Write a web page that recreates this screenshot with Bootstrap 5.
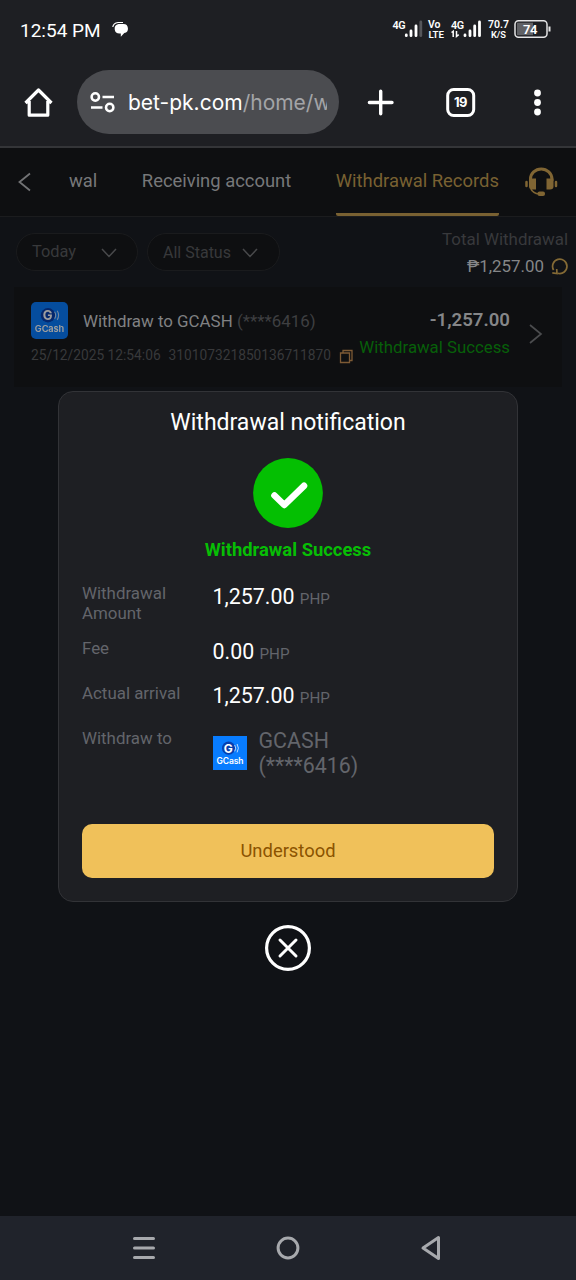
<!DOCTYPE html>
<html lang="en">
<head>
<meta charset="utf-8">
<meta name="viewport" content="width=device-width, initial-scale=1">
<title>Withdrawal Records</title>
<link href="https://cdn.jsdelivr.net/npm/bootstrap@5.3.0/dist/css/bootstrap.min.css" rel="stylesheet">
<script src="https://cdn.jsdelivr.net/npm/bootstrap@5.3.0/dist/js/bootstrap.bundle.min.js" defer></script>
<style>
  body { font-family: Roboto, "Liberation Sans", sans-serif; background: #101216; color: #fff; height: 1280px; line-height: 1; overflow: hidden; }
  svg { display: block; flex: none; }
  span, h1 { white-space: nowrap; }
  .chrome { background: #1e1f23; }
  .status { height: 58px; padding: 0 24px 0 20px; }
  .clock { font-size: 19px; padding-top: 2px; }
  .toolbar { height: 90px; padding: 0 30px 0 22px; border-bottom: 2px solid #343538; }
  .url { width: 262px; height: 64px; margin-left: 22px; padding-left: 13px; background: #4b4c50; }
  .address { font-family: Inter, sans-serif; font-size: 21px; width: 199px; overflow: hidden; line-height: 32px; margin: 2px 0 0 12px; }
  .address i { font-style: normal; color: #a3a4a7; }

  .tabs { height: 69px; background: #0e0f11; border-bottom: 1px solid #1b1c1e; color: #77787a; font-size: 18.4px; line-height: 22px; }
  .tabs span { padding-top: 22px; }
  .back { margin: 24px 0 0 16px; }
  .t1 { margin-left: 35px; } .t2 { margin-left: 44.5px; } .t3 { margin-left: 44.5px; }
  .tabs .tab-on { color: #796132; height: 68px; border-bottom: 3px solid #796132; border-radius: 2px; }
  .support { margin: 17px 0 0 25px; }

  .filters { padding: 16px 8px 0 16px; height: 54px; gap: 9px; }
  .pill { height: 38px; border: 1px solid #1a1b1d; background: #0e0f11; color: #38393b; font-size: 16.4px; padding: 1px 20px 0 15px; }
  .pill-day { width: 122px; }
  .pill-status { width: 133px; padding-right: 21px; font-size: 16px; }
  .total { color: #38393c; font-size: 16.9px; }
  .total > span { line-height: 20px; margin-top: -4px; }
  .sum { height: 20px; margin-top: 8px; gap: 7px; }
  .num { color: #858688; }

  .record { margin: 16px 14px 0; height: 100px; background: #0e0f11; }
  .left { padding: 15px 0 0 17px; width: 345px; }
  .rlogo { border-radius: 5px; filter: brightness(.62); }
  .rname { margin-left: 15px; font-size: 16.9px; color: #808183; padding-top: 1px; }
  .rname i { font-style: normal; color: #3e3f41; }
  .meta { margin-top: 9px; font-size: 13.75px; color: #38393b; height: 16px; }
  .rid { margin: 0 8px 0 8px; }
  .right { width: 151px; padding-top: 21px; white-space: nowrap; }
  .right > * { display: flex; justify-content: flex-end; }
  .amt { font-size: 18.6px; font-weight: 600; color: #858688; line-height: 24px; }
  .st { color: #075f09; font-size: 16.8px; line-height: 20px; margin-top: 5px; }
  .chev { margin: 36px 0 0 19px; }

  .scrim { inset: 0; padding-top: 243px; }
  .dialog-box { width: 460px; height: 511px; background: #1e1f23; border: 1.5px solid #323337; border-radius: 15px; padding: 0 23px; }
  .dialog-box h1 { font-size: 23px; line-height: 28px; margin: 17px 0 21px; font-weight: 400; }
  .done { color: #07be05; font-size: 18.4px; font-weight: 700; line-height: 22px; margin-top: 11px; }
  .lbl { width: 130.5px; color: #63656b; font-size: 16.9px; line-height: 20px; flex: none; }
  .val { font-size: 21.4px; line-height: 26px; padding-top: 1px; margin-bottom: -1px; }
  .val small { font-size: 15.2px; color: #63656b; }
  .r1 { margin-top: 22px; } .r2 { margin-top: 15px; } .r3 { margin-top: 17px; } .r4 { margin-top: 17px; }
  .r3 .val { padding-top: 0; margin-bottom: 0; }
  .glogo { margin-top: 8px; }
  .acct { margin-left: 12px; font-size: 21.4px; line-height: 25px; color: #63656b; }
  .ok { height: 54px; background: #f0c15a; color: #8b5300; border-radius: 10px; font-size: 18.4px; border: 0; width: 412px; line-height: 52px; margin-top: auto; margin-bottom: 23px; }
  .close-x { margin-top: 22px; }
  .keys { height: 64px; background: #20232b; }
</style>
</head>
<body class="d-flex flex-column">

<header class="chrome">
  <div class="status d-flex align-items-center">
    <span class="clock">12:54 PM</span>
    <svg class="ms-2" width="22" height="20" viewBox="0 0 22 20"><path d="M3.800 8Q4.500 3.900 9 3.500h5" fill="none" stroke="#fff" stroke-width="1.200"/><path d="M9.500 5h5a4.600 4.600 0 0 1 .8 9.100L11.800 17.800v-3.300h-1.300A4.800 4.800 0 0 1 9.500 5z" fill="#fff"/></svg>
    <svg class="ms-auto" width="160" height="26" viewBox="392 16 160 26" font-family="Roboto, sans-serif" font-weight="600" font-size="10" fill="#fff">
      <text x="392.500" y="28.500" font-size="10.800" textLength="13">4G</text>
      <g stroke="#fff" stroke-width="2.800" stroke-linecap="round"><path d="M406.300 34.900v.8M411 31v4.700M416 26v9.700"/><path d="M420.800 22v13.700" stroke="#55565a"/></g>
      <text x="428" y="27.500" textLength="12.500" lengthAdjust="spacingAndGlyphs">Vo</text><text x="428.500" y="37.500" font-size="9.800" textLength="15.500" lengthAdjust="spacingAndGlyphs">LTE</text>
      <text x="451" y="28.500" font-size="10.800" textLength="13">4G</text>
      <path d="M451.500 32.500l1.700-1.200V37M456.500 31v5.500l2.200-1.800" fill="none" stroke="#fff" stroke-width="1.500"/>
      <g stroke="#fff" stroke-width="2.800" stroke-linecap="round"><path d="M465 34.900v.8M470 31v4.700M474.700 26v9.700M479.500 22v13.700"/></g>
      <text x="488" y="27.500" textLength="21" lengthAdjust="spacingAndGlyphs">70.7</text><text x="491" y="37.500" font-size="9.300" textLength="15">K/S</text>
      <rect x="515" y="20.700" width="32" height="16.500" rx="3.500" fill="none" stroke="#e4e4e5" stroke-width="1.500"/>
      <path d="M517 22.700h16v12.500h-16z" fill="#606165"/><path d="M549.500 26.500v5" stroke="#e4e4e5" stroke-width="2"/>
      <text x="523" y="33.700" font-size="13" textLength="14.500">74</text>
    </svg>
  </div>
  <div class="toolbar d-flex align-items-center">
    <svg width="33" height="34" viewBox="22 85 33 34"><path d="M25.500 103L38.500 90l13 13M29.200 101v14.200h18.600V101" fill="none" stroke="#fff" stroke-width="3.200" stroke-linejoin="round"/></svg>
    <div class="url rounded-pill d-flex align-items-center">
      <svg width="26" height="24" viewBox="90 90 26 24" fill="none" stroke="#fff" stroke-width="2.500"><circle cx="95.300" cy="97" r="3.700"/><path d="M102.500 97H114M91 107.500h11.500"/><circle cx="109.700" cy="107.500" r="3.700"/></svg>
      <span class="address">bet-pk.com<i>/home/w</i></span>
    </div>
    <svg width="190" height="34" viewBox="356 85 190 34" class="ms-auto" fill="none" stroke="#fff" stroke-width="3.400"><path d="M380.700 91.200v22.600M369.400 102.500h22.600" stroke-linecap="round"/><rect x="447.700" y="89.500" width="26" height="26" rx="6" stroke-width="3"/><text x="460.800" y="107.300" text-anchor="middle" font-family="Inter, sans-serif" font-size="13" font-weight="700" fill="#fff" stroke="none" textLength="13.500">19</text><g fill="#fff" stroke="none"><circle cx="537.500" cy="93" r="3.400"/><circle cx="537.500" cy="102.500" r="3.400"/><circle cx="537.500" cy="112" r="3.400"/></g></svg>
  </div>
</header>

<main class="flex-grow-1 position-relative">
  <nav class="tabs d-flex">
    <svg class="back" width="18" height="22" viewBox="16 172 18 22"><path d="M30 173.500L19.500 182 30 190.500" fill="none" stroke="#727375" stroke-width="1.800"/></svg>
    <span class="t1">wal</span>
    <span class="t2">Receiving account</span>
    <span class="t3 tab-on">Withdrawal Records</span>
    <svg class="support" width="36" height="34" viewBox="524 165 36 34" fill="none" stroke="#806533"><path d="M530.500 181v-2a10.700 10 0 0 1 21.400 0v2" stroke-width="3"/><path d="M529 178.500h7v11h-3.500q-3.500 0-3.500-3zM546.500 178.500h7v8q0 3-3.500 3h-3.500z" fill="#806533" stroke="none"/><path d="M526.500 182v4M556 182v4" stroke-width="2.500" stroke-linecap="round"/><path d="M531 189q2 4.500 8 4.800" stroke-width="1.800"/><rect x="537.500" y="191.500" width="7.500" height="4.500" rx="2" fill="#806533" stroke="none"/></svg>
  </nav>

  <section class="d-flex filters">
    <div class="pill pill-day rounded-pill d-flex align-items-center"><span>Today</span><svg class="ms-auto" width="16" height="12" viewBox="0 0 16 12"><path d="M1 2l7 7.500L15 2" fill="none" stroke="#48494b" stroke-width="1.500"/></svg></div>
    <div class="pill pill-status rounded-pill d-flex align-items-center"><span>All Status</span><svg class="ms-auto" width="16" height="12" viewBox="0 0 16 12"><path d="M1 2l7 7.500L15 2" fill="none" stroke="#48494b" stroke-width="1.500"/></svg></div>
    <div class="total ms-auto d-flex flex-column align-items-end">
      <span>Total Withdrawal</span>
      <div class="d-flex align-items-center sum"><span class="num">₱1,257.00</span><svg width="17" height="18" viewBox="0 0 17 18"><path d="M2.600 13A7.200 7.200 0 1 1 7 16.300M1.300 15.800l4.700.7-.3-4.500" fill="none" stroke="#846a35" stroke-width="1.700"/></svg></div>
    </div>
  </section>

  <article class="record d-flex">
    <div class="left">
      <div class="d-flex align-items-center">
        <svg class="rlogo" width="37" height="37" viewBox="0 0 34 34"><rect width="34" height="34" fill="#087cff"/><circle cx="15.600" cy="12.200" r="6.600" fill="#063fae"/><text x="10.700" y="16.700" font-family="Inter, sans-serif" font-weight="700" font-size="12" fill="#fff">G</text><path d="M21.700 9q2 3.200 0 6.400M24.100 8q2.600 4.200 0 8.400" fill="none" stroke="#b9d8ff"/><text x="3.500" y="28" font-family="Inter, sans-serif" font-weight="600" font-size="8.500" textLength="27" fill="#fff">GCash</text></svg>
        <span class="rname">Withdraw to GCASH <i>(****6416)</i></span>
      </div>
      <div class="d-flex align-items-center meta"><span>25/12/2025 12:54:06</span><span class="rid">310107321850136711870</span><svg width="15" height="15" viewBox="0 0 15 15" fill="none" stroke="#7d5a35" stroke-width="1.300"><path d="M1.500 4h9v9.500h-9zM4 3.500V1.500h9v10h-2"/></svg></div>
    </div>
    <div class="right"><div class="amt">-1,257.00</div><div class="st">Withdrawal Success</div></div>
    <svg class="chev" width="14" height="22" viewBox="0 0 14 22"><path d="M1 2l11 9L1 20" fill="none" stroke="#4b4c4e" stroke-width="1.700"/></svg>
  </article>

  <div class="scrim position-absolute d-flex flex-column align-items-center">
    <section class="dialog-box d-flex flex-column" role="dialog">
      <h1 class="text-center">Withdrawal notification</h1>
      <svg class="mx-auto" width="70" height="70" viewBox="0 0 70 70"><circle cx="35" cy="35" r="34.900" fill="#04bf02"/><path d="M21.500 37.500L31.300 47 51 27.800" fill="none" stroke="#fff" stroke-width="6.600" stroke-linecap="round" stroke-linejoin="round"/></svg>
      <div class="done text-center">Withdrawal Success</div>
      <div class="d-flex r1"><div class="lbl">Withdrawal<br>Amount</div><div class="val">1,257.00 <small>PHP</small></div></div>
      <div class="d-flex r2"><div class="lbl">Fee</div><div class="val">0.00 <small>PHP</small></div></div>
      <div class="d-flex r3"><div class="lbl">Actual arrival</div><div class="val">1,257.00 <small>PHP</small></div></div>
      <div class="d-flex r4"><div class="lbl">Withdraw to</div>
        <svg class="glogo" width="34" height="34" viewBox="0 0 34 34"><rect width="34" height="34" fill="#087cff"/><circle cx="15.600" cy="12.200" r="6.600" fill="#063fae"/><text x="10.700" y="16.700" font-family="Inter, sans-serif" font-weight="700" font-size="12" fill="#fff">G</text><path d="M21.700 9q2 3.200 0 6.400M24.100 8q2.600 4.200 0 8.400" fill="none" stroke="#b9d8ff"/><text x="3.500" y="28" font-family="Inter, sans-serif" font-weight="600" font-size="8.500" textLength="27" fill="#fff">GCash</text></svg>
        <div class="acct">GCASH<br>(****6416)</div></div>
      <button class="ok btn p-0">Understood</button>
    </section>
    <svg class="close-x" width="48" height="48" viewBox="0 0 48 48" fill="none" stroke="#fff"><circle cx="24" cy="24" r="21.400" stroke-width="3.200"/><path d="M16 16l16 16M32 16L16 32" stroke-width="3" stroke-linecap="round"/></svg>
  </div>
</main>

<footer class="keys">
  <svg width="576" height="64" viewBox="0 1216 576 64" fill="none" stroke="#a7a9ad" stroke-width="3"><path d="M134.500 1238.500h19M134.500 1248h19M134.500 1257.500h19" stroke-linecap="round"/><circle cx="288" cy="1248" r="9.900"/><path d="M423 1248l15.500-10.500v21z" stroke-linejoin="round"/></svg>
</footer>
</body>
</html>
